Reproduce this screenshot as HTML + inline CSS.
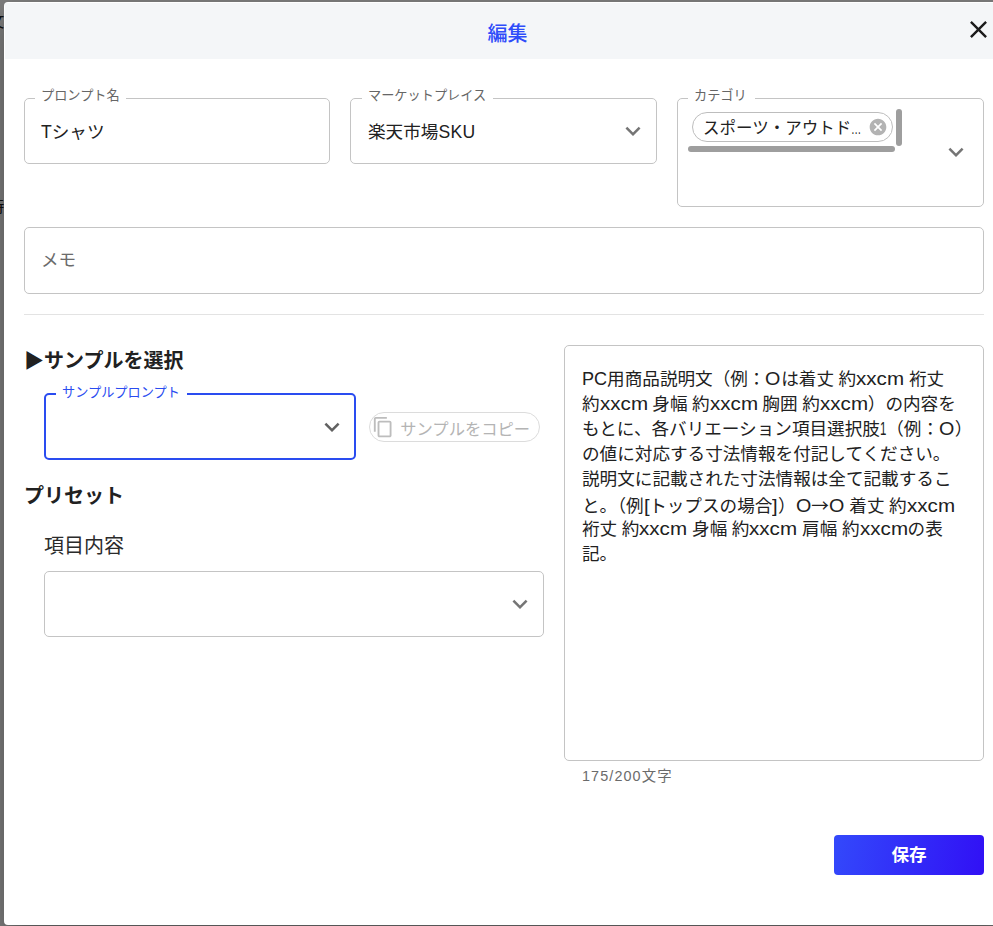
<!DOCTYPE html>
<html lang="ja">
<head>
<meta charset="utf-8">
<title>編集</title>
<style>
*{box-sizing:border-box;margin:0;padding:0}
html,body{width:993px;height:926px;overflow:hidden;background:#fff;
  font-family:"Liberation Sans","Noto Sans CJK JP",sans-serif;color:#212121}
.abs{position:absolute}
#dialog{position:absolute;left:4px;top:2px;width:1000px;height:923px;background:#fff;border-radius:4px;
  box-shadow:0 11px 15px -7px rgba(0,0,0,.2),0 24px 38px 3px rgba(0,0,0,.14),0 9px 46px 8px rgba(0,0,0,.12);overflow:hidden}
#head{position:absolute;left:1px;top:1px;width:100%;height:56px;background:#f4f6f8}
#title{position:absolute;left:0;top:17px;font-weight:500;width:1007px;text-align:center;font-size:20px;line-height:30px;color:#2e4cfa}
.field{position:absolute;border:1px solid #c4c4c4;border-radius:5px}
.lbl{position:absolute;top:-13px;left:10px;padding:0 6px;background:#fff;font-size:13.2px;line-height:20px;color:#666;white-space:nowrap}
.val{position:absolute;left:16px;font-size:17.6px;line-height:24px;white-space:nowrap;color:#212121}
h3{position:absolute;font-size:20px;line-height:28px;font-weight:700;color:#212121;white-space:nowrap}
svg{position:absolute;display:block}
.el{font-style:normal;display:inline-block;width:11px;transform:scaleX(.62);transform-origin:0 50%}
#ta{font-size:17.6px;line-height:25px;color:#212121;white-space:nowrap;word-spacing:-.3px}
#ta div{height:25px}
#ta i{font-style:normal;display:inline-block;transform-origin:0 50%;white-space:nowrap}
#ta b{font-weight:400;font-family:"Noto Sans CJK JP",sans-serif}
#ta .x{width:48.1px;transform:scaleX(1.17)}
#ta .pc{width:25.1px;transform:scaleX(1.027)}
#ta .o{width:15.8px;transform:scaleX(1.12)}
#ta .n1{width:6.4px;transform:scaleX(.65)}
#ta .br{width:5.6px;transform:scaleX(1.144)}
</style>
</head>
<body>
<span class="abs" style="left:-11.2px;top:14.3px;font-size:15.5px;line-height:16px;color:#222">文</span>
<span class="abs" style="left:-11.8px;top:197.6px;font-size:16px;line-height:17px;color:#222">時</span>
<div class="abs" style="left:0;top:0;width:993px;height:926px;background:rgba(0,0,0,.5)"></div>
<div id="dialog">
  <div id="head"></div>
  <div id="title">編集</div>
  <svg style="left:960.4px;top:12.9px" width="29" height="29" viewBox="0 0 24 24"><path d="M19 6.41 17.59 5 12 10.59 6.41 5 5 6.41 10.59 12 5 17.59 6.41 19 12 13.41 17.59 19 19 17.59 13.41 12z" fill="#1c1c1c"/></svg>

  <!-- row 1 -->
  <div class="field" style="left:20px;top:96px;width:306px;height:66px">
    <span class="lbl">プロンプト名</span>
    <span class="val" style="top:21px">Tシャツ</span>
  </div>
  <div class="field" style="left:346px;top:96px;width:307px;height:66px">
    <span class="lbl" style="left:11px;padding-right:7px">マーケットプレイス</span>
    <span class="val" style="top:21px;left:17px">楽天市場<span style="letter-spacing:.3px">SKU</span></span>
    <svg style="left:266.6px;top:16.8px" width="30" height="30" viewBox="0 0 24 24"><path d="M16.59 8.59 12 13.17 7.41 8.59 6 10l6 6 6-6z" fill="#757575"/></svg>
  </div>
  <div class="field" style="left:673px;top:96px;width:307px;height:109px">
    <span class="lbl" style="padding-right:8px">カテゴリ</span>
    <div class="abs" style="left:14px;top:13px;width:200.5px;height:30px;border:1px solid #bdbdbd;border-radius:15px"></div>
    <span class="val" style="left:25px;top:16.5px;font-size:16.5px">スポーツ・アウトド<i class="el">…</i></span>
    <svg style="left:190px;top:18px" width="20" height="20" viewBox="0 0 24 24"><path d="M12 2C6.47 2 2 6.47 2 12s4.47 10 10 10 10-4.47 10-10S17.53 2 12 2zm5 13.59L15.59 17 12 13.41 8.41 17 7 15.59 10.59 12 7 8.41 8.41 7 12 10.59 15.59 7 17 8.410 13.41 12 17 15.59z" fill="#b3b3b3"/></svg>
    <div class="abs" style="left:10px;top:47px;width:207px;height:6px;border-radius:3px;background:#9e9e9e"></div>
    <div class="abs" style="left:218px;top:10px;width:6px;height:37px;border-radius:3px;background:#9e9e9e"></div>
    <svg style="left:262.6px;top:38.47px" width="30" height="30" viewBox="0 0 24 24"><path d="M16.59 8.59 12 13.17 7.41 8.59 6 10l6 6 6-6z" fill="#757575"/></svg>
  </div>

  <!-- memo -->
  <div class="field" style="left:20px;top:225px;width:960px;height:67px">
    <span class="val" style="top:20px;color:#6b6b6b">メモ</span>
  </div>
  <div class="abs" style="left:20px;top:312px;width:960px;height:1px;background:#e3e3e3"></div>

  <!-- left column -->
  <h3 style="left:20px;top:345.2px">▶サンプルを選択</h3>
  <div class="field" style="left:40px;top:391px;width:312px;height:67px;border:2px solid #2a4cf0">
    <span class="lbl" style="color:#2a4cf0;top:-12px;left:10px;padding-right:7.5px">サンプルプロンプト</span>
    <svg style="left:270.7px;top:17.17px" width="30" height="30" viewBox="0 0 24 24"><path d="M16.59 8.59 12 13.17 7.41 8.59 6 10l6 6 6-6z" fill="#616161"/></svg>
  </div>
  <div class="abs" style="left:365px;top:410px;width:171px;height:30px;border:1px solid #dcdcdc;border-radius:15px"></div>
  <svg style="left:367.9px;top:414.3px" width="22.3" height="22.3" viewBox="0 0 24 24"><path d="M16 1H4c-1.1 0-2 .9-2 2v14h2V3h12V1zm3 4H8c-1.1 0-2 .9-2 2v14c0 1.1.9 2 2 2h11c1.1 0 2-.9 2-2V7c0-1.1-.9-2-2-2zm0 16H8V7h11v14z" fill="#bdbdbd"/></svg>
  <span class="val" style="left:396.3px;top:414.5px;font-size:16.3px;color:#b4b4b4">サンプルをコピー</span>

  <h3 style="left:20px;top:480.3px">プリセット</h3>
  <div class="abs" style="left:40px;top:529.8px;font-size:20px;line-height:28px;color:#2b2b2b">項目内容</div>
  <div class="field" style="left:40px;top:569px;width:500px;height:66px">
    <svg style="left:460px;top:16.95px" width="30" height="30" viewBox="0 0 24 24"><path d="M16.59 8.59 12 13.17 7.41 8.59 6 10l6 6 6-6z" fill="#757575"/></svg>
  </div>

  <!-- textarea -->
  <div class="field" style="left:560px;top:343px;width:420px;height:416px"></div>
  <div id="ta" class="abs" style="left:578px;top:364.5px;width:400px">
<div><i class="pc">PC</i>用商品説明文（例：<i class="o">O</i>は着丈 約<i class="x">xxcm</i> 裄丈</div>
<div>約<i class="x">xxcm</i> 身幅 約<i class="x">xxcm</i> 胸囲 約<i class="x">xxcm</i>）の内容を</div>
<div>もとに、各バリエーション項目選択肢<i class="n1">1</i>（例：<i class="o">O</i>）</div>
<div>の値に対応する寸法情報を付記してください。</div>
<div>説明文に記載された寸法情報は全て記載するこ</div>
<div>と。（例<i class="br">[</i>トップスの場合<i class="br">]</i>）<i class="o">O</i><b>→</b><i class="o">O</i> 着丈 約<i class="x">xxcm</i></div>
<div>裄丈 約<i class="x">xxcm</i> 身幅 約<i class="x">xxcm</i> 肩幅 約<i class="x">xxcm</i>の表</div>
<div>記。</div>
</div>
  <div class="abs" style="left:578px;top:764px;font-size:14.4px;line-height:20px;color:#6b6b6b;letter-spacing:1.1px">175/200文字</div>

  <!-- save -->
  <div class="abs" style="left:830px;top:833px;width:150px;height:40px;border-radius:4px;background:linear-gradient(100deg,#3349fb,#3110f5);color:#fff;font-weight:700;font-size:17.6px;line-height:41.4px;text-align:center">保存</div>
</div>
</body>
</html>
